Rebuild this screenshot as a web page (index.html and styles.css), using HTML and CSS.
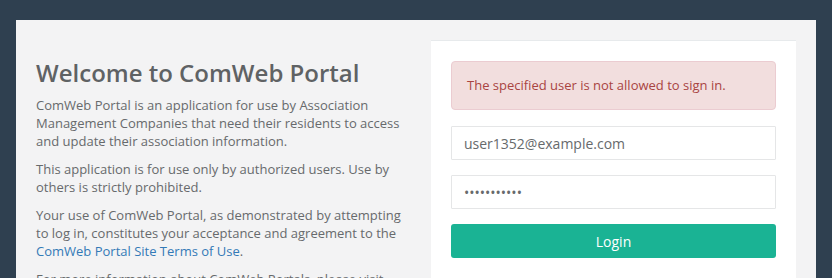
FILE: index.html
```html
<!DOCTYPE html>
<html lang="en">
<head>
  <meta charset="UTF-8" />
  <meta name="viewport" content="width=device-width, initial-scale=1.0"/>
  <title>ComWeb Portal - Login</title>
  <link rel="stylesheet" href="styles.css">
</head>
<body>

  <div class="login-wrap">
    <div class="row">
      <div class="col intro">
        <h2>Welcome to ComWeb Portal</h2>
        <p>ComWeb Portal is an application for use by Association Management Companies that need their residents to access and update their association information.</p>
        <p>This application is for use only by authorized users. Use by others is strictly prohibited.</p>
        <p>Your use of ComWeb Portal, as demonstrated by attempting to log in, constitutes your acceptance and agreement to the <a href="#">ComWeb Portal Site Terms of Use</a>.</p>
        <p>For more information about ComWeb Portals, please visit our website or contact your management company.</p>
      </div>
      <div class="col">
        <div class="login-box">
          <div class="alert">The specified user is not allowed to sign in.</div>
          <form>
            <input class="form-control" type="email" value="user1352@example.com">
            <input class="form-control" type="password" value="secretpass1">
            <button type="button" class="btn-login">Login</button>
            <div class="forgot"><a href="#">Forgot password?</a></div>
          </form>
        </div>
      </div>
    </div>
  </div>

</body>
</html>
```

FILE: styles.css
```css
body {
  margin: 0;
  background: #2f4050;
  font-family: "Open Sans", "Liberation Sans", Arial, sans-serif;
  font-size: 13px;
  line-height: 18px;
  color: #676a6c;
}
a {
  color: #337ab7;
  text-decoration: none;
}
.login-wrap {
  width: 760px;
  margin: 20px 16px 0;
  padding: 0 20px 20px;
  background: #f3f3f4;
  min-height: 300px;
}
.row {
  display: flex;
  margin: 0 -15px;
}
.col {
  flex: 1;
  padding: 0 15px;
}
.intro h2 {
  margin: 40px 0 10px;
  font-size: 24px;
  line-height: 1.1;
  font-weight: 600;
  color: #5f6264;
}
.intro p {
  margin: 0 0 10px;
}
.login-box {
  margin-top: 20px;
  background: #fff;
  border-top: 1px solid #e7eaec;
  padding: 20px;
}
.alert {
  padding: 15px;
  line-height: 17px;
  background: #f2dede;
  border: 1px solid #ebccd1;
  border-radius: 4px;
  color: #a94442;
  margin-bottom: 16px;
}
.form-control {
  display: block;
  box-sizing: border-box;
  width: 100%;
  height: 34px;
  padding: 6px 12px;
  margin: 0 0 15px;
  border: 1px solid #e5e6e7;
  border-radius: 1px;
  font-family: inherit;
  font-size: 14px;
  color: #676a6c;
  background: #fff;
}
.btn-login {
  display: block;
  width: 100%;
  height: 34px;
  border: none;
  border-radius: 3px;
  background: #1ab394;
  color: #fff;
  font-family: inherit;
  font-size: 14px;
  cursor: pointer;
  margin-bottom: 17px;
}
.forgot {
  text-align: center;
  font-size: 12px;
}
```
